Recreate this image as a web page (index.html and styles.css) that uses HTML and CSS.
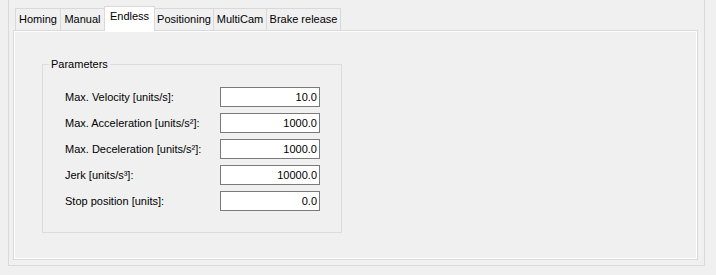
FILE: index.html
```html
<!DOCTYPE html>
<html lang="en">
<head>
<meta charset="UTF-8">
<title>Axis settings - Endless</title>
<link rel="stylesheet" href="styles.css">
</head>
<body>
    <div class="frame">
        <div class="tabs">
            <div class="tab w46">Homing</div>
            <div class="tab w45">Manual</div>
            <div class="tab w51 selected">Endless</div>
            <div class="tab w60">Positioning</div>
            <div class="tab w54">MultiCam</div>
            <div class="tab w75">Brake release</div>
        </div>
        <div class="panel">
            <fieldset class="gruppo">
                <legend>Parameters</legend>
                <div class="righe">
                    <label for="vel">Max. Velocity [units/s]:</label>
                    <input id="vel" type="text" value="10.0">
                    <label for="acc">Max. Acceleration [units/s²]:</label>
                    <input id="acc" type="text" value="1000.0">
                    <label for="dec">Max. Deceleration [units/s²]:</label>
                    <input id="dec" type="text" value="1000.0">
                    <label for="jerk">Jerk [units/s³]:</label>
                    <input id="jerk" type="text" value="10000.0">
                    <label for="stop">Stop position [units]:</label>
                    <input id="stop" type="text" value="0.0">
                </div>
            </fieldset>
        </div>
    </div>
</body>
</html>
```

FILE: styles.css
```css
* {box-sizing: border-box;}
body {margin: 0; background: #f0f0f0; font-family: "Liberation Sans", Arial, sans-serif; font-size: 11px; color: #000;}

.frame {width: 697px; margin-left: 8px; border: 1px solid #dadada; border-top: none; padding: 0 6px 5px 4px;}

.tabs {display: flex; align-items: flex-end; padding-top: 6px; margin-left: 2px;}
.tab {height: 22px; border: 1px solid #d9d9d9; border-bottom: none; margin-left: -1px; padding-top: 4px; line-height: 13px; text-align: center; white-space: nowrap; background: #f0f0f0;}
.tab:first-child {margin-left: 0;}
.tab.selected {height: 25px; margin-bottom: -1px; padding-top: 3px; background: #fff; position: relative; z-index: 1;}
.w45 {width: 45px;}
.w46 {width: 46px;}
.w51 {width: 51px;}
.w54 {width: 54px;}
.w60 {width: 60px;}
.w75 {width: 75px;}

.panel {height: 230px; border: 1px solid #d9d9d9; box-shadow: inset 0 0 0 1px #fff; padding: 27px 0 0 28px;}

.gruppo {width: 300px; margin: 0; border: 1px solid #dcdcdc; padding: 0 0 21px 6px; min-width: 0;}
.gruppo legend {padding: 0 2px; line-height: 13px;}

.righe {display: grid; grid-template-columns: 155px 100px; grid-auto-rows: 20px; row-gap: 6px; align-items: center; margin: 16px 0 0 16px;}
.righe label {line-height: 13px;}
.righe input {width: 100px; height: 20px; margin: 0; border: 1px solid #7a7a7a; background: #fff; padding: 0 2px; font-family: "Liberation Sans", Arial, sans-serif; font-size: 11px; color: #000; text-align: right;}
```
